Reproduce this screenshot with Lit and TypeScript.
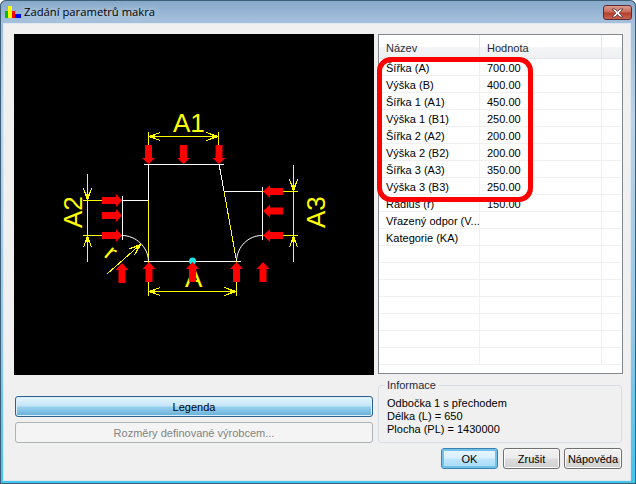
import { LitElement, css, html, svg } from "lit";
import { customElement } from "lit/decorators.js";

type Row = [string, string];

const ROWS: Row[] = [
  ["Šířka (A)", "700.00"],
  ["Výška (B)", "400.00"],
  ["Šířka 1 (A1)", "450.00"],
  ["Výška 1 (B1)", "250.00"],
  ["Šířka 2 (A2)", "200.00"],
  ["Výška 2 (B2)", "200.00"],
  ["Šířka 3 (A3)", "350.00"],
  ["Výška 3 (B3)", "250.00"],
  ["Rádius (r)", "150.00"],
  ["Vřazený odpor (V...", ""],
  ["Kategorie (KA)", ""],
  ["", ""],
  ["", ""],
  ["", ""],
  ["", ""],
  ["", ""],
  ["", ""],
  ["", ""],
];

const WHITE = "#fff";
const YELLOW = "#ff0";

// [x1, y1, x2, y2, colour]
const LINES: [number, number, number, number, string][] = [
  [144, 164.5, 224, 164.5, WHITE],
  [148.5, 164, 148.5, 200, WHITE],
  [148.5, 200, 148.5, 261, YELLOW],
  [219, 164, 224, 191, WHITE],
  [224, 191, 236.5, 261, YELLOW],
  [224, 191.5, 262, 191.5, WHITE],
  [122, 200.5, 148, 200.5, WHITE],
  [122.5, 196, 122.5, 240, WHITE],
  [262.5, 187, 262.5, 240, WHITE],
  [144, 261.5, 241, 261.5, WHITE],
  [148.5, 132, 148.5, 146, YELLOW],
  [218.5, 132, 218.5, 146, YELLOW],
  [148, 136.5, 219, 136.5, YELLOW],
  [148.5, 261, 148.5, 296, YELLOW],
  [236.5, 261, 236.5, 296, YELLOW],
  [148, 291.5, 237, 291.5, YELLOW],
  [83, 200.5, 122, 200.5, YELLOW],
  [83, 235.5, 122, 235.5, YELLOW],
  [87.5, 174, 87.5, 262, YELLOW],
  [262, 191.5, 298, 191.5, YELLOW],
  [262, 235.5, 298, 235.5, YELLOW],
  [293.5, 165, 293.5, 262, YELLOW],
  [107, 274, 141, 244, YELLOW],
];

// fan ticks on the dimension lines: tip x, tip y, direction x, direction y
const TICKS: [number, number, number, number][] = [
  [148.5, 136.5, 1, 0],
  [218.5, 136.5, -1, 0],
  [148.5, 291.5, 1, 0],
  [236.5, 291.5, -1, 0],
  [87.5, 200.5, 0, -1],
  [87.5, 235.5, 0, 1],
  [293.5, 191.5, 0, -1],
  [293.5, 235.5, 0, 1],
  [141, 244, -0.75, 0.66],
];

const arrowDown = (x: number, tip: number) =>
  `${x - 3.5},${tip - 19} ${x + 3.5},${tip - 19} ${x + 3.5},${tip - 6} ${x + 6.5},${tip - 6} ${x},${tip} ${x - 6.5},${tip - 6} ${x - 3.5},${tip - 6}`;
const arrowUp = (x: number, tip: number) =>
  `${x - 3.5},${tip + 20} ${x + 3.5},${tip + 20} ${x + 3.5},${tip + 7} ${x + 6.5},${tip + 7} ${x},${tip} ${x - 6.5},${tip + 7} ${x - 3.5},${tip + 7}`;
const arrowRight = (tip: number, y: number) =>
  `${tip - 20},${y - 3.5} ${tip - 20},${y + 3.5} ${tip - 6},${y + 3.5} ${tip - 6},${y + 6.5} ${tip},${y} ${tip - 6},${y - 6.5} ${tip - 6},${y - 3.5}`;
const arrowLeft = (tip: number, y: number) =>
  `${tip + 20},${y - 3.5} ${tip + 20},${y + 3.5} ${tip + 7},${y + 3.5} ${tip + 7},${y + 6.5} ${tip},${y} ${tip + 7},${y - 6.5} ${tip + 7},${y - 3.5}`;

const ARROWS = [
  arrowDown(148.5, 164),
  arrowDown(183.5, 164),
  arrowDown(219, 164),
  arrowRight(122, 200.5),
  arrowRight(122, 215.5),
  arrowRight(122, 235.5),
  arrowLeft(263, 191.5),
  arrowLeft(263, 211),
  arrowLeft(263, 235.5),
  arrowUp(122, 263),
  arrowUp(149, 262),
  arrowUp(192.5, 262),
  arrowUp(236.5, 262),
  arrowUp(263, 262),
];

function fan(t: [number, number, number, number]) {
  const [x, y, dx, dy] = t;
  const nx = -dy;
  const ny = dx;
  return [-1, 1].flatMap((s) => {
    const p = (a: number, b: number) => `${x + dx * a + nx * b * s},${y + dy * a + ny * b * s}`;
    return [
      svg`<polyline points="${p(0, 0)} ${p(12, 4)}" />`,
      svg`<polyline points="${p(0, 0)} ${p(8, 2)}" />`,
    ];
  });
}

@customElement("app-root")
export class AppRoot extends LitElement {
  static styles = css`
    :host {
      display: block;
      width: 636px;
      height: 484px;
      font-family: "Liberation Sans", Arial, sans-serif;
      font-size: 11px;
      color: #000;
    }
    .window {
      position: relative;
      box-sizing: border-box;
      width: 636px;
      height: 484px;
      display: flex;
      flex-direction: column;
      padding: 0 5px 3px 3px;
      background: linear-gradient(180deg, #86a8c9 0, #a5c0dc 22px, #bcd3e8 120px, #8fc8e8 70%, #45c4ee 100%);
      border-radius: 6px 6px 0 0;
      box-shadow: inset 0 0 0 1px #3d5e78;
    }
    .titlebar {
      flex: none;
      height: 23px;
      display: flex;
      align-items: center;
      gap: 3px;
      padding: 0 0 0 2px;
    }
    .title {
      flex: 1;
      font-family: "Open Sans", sans-serif;
      font-size: 11.25px;
      text-shadow: 0 0 6px #dbe8f4;
    }
    .close {
      width: 29px;
      height: 15px;
      margin-top: 2px;
      margin-right: -1px;
      box-sizing: border-box;
      border: 1px solid #5e2a33;
      border-radius: 3px;
      background: linear-gradient(180deg, #dc9d8f 0, #c86a58 45%, #b2402c 55%, #c86552 100%);
      display: flex;
      align-items: center;
      justify-content: center;
    }
    .body {
      flex: 1;
      min-height: 0;
      box-sizing: border-box;
      background: #f0f0f0;
      border: 1px solid #dfe8ef;
      display: grid;
      grid-template-columns: 360px 244px;
      column-gap: 4px;
      grid-template-rows: 341px 1fr;
      padding: 10px 0 0 10px;
    }
    .canvas {
      background: #000;
      width: 360px;
      height: 341px;
    }
    .canvas svg {
      display: block;
    }
    .table-wrap {
      position: relative;
    }
    .table {
      box-sizing: border-box;
      width: 245px;
      height: 340px;
      background: #fff;
      border: 1px solid #828790;
      overflow: hidden;
    }
    .row {
      display: grid;
      grid-template-columns: 101px 122px 1fr;
      height: 17px;
      box-sizing: border-box;
      border-bottom: 1px solid #f0f0f0;
      line-height: 18px;
      white-space: nowrap;
    }
    .row > div {
      padding-left: 7px;
      border-right: 1px solid #f0f0f0;
      overflow: hidden;
    }
    .row > div:last-child {
      border-right: none;
    }
    .head {
      height: 24px;
      line-height: 27px;
      color: #1f2c3c;
      background: linear-gradient(180deg, #fff 0, #fff 50%, #f3f4f6 55%, #eff0f2 100%);
      border-bottom: 1px solid #e4e6e9;
    }
    .head > div {
      border-right: 1px solid #e3e5e8;
    }
    .mark {
      position: absolute;
      left: -1px;
      top: 23px;
      width: 156px;
      height: 145px;
      box-sizing: border-box;
      border: 5px solid #f00;
      border-radius: 14px;
      pointer-events: none;
    }
    .left {
      display: flex;
      flex-direction: column;
      gap: 5px;
      padding: 21px 0 0 1px;
    }
    .btn {
      box-sizing: border-box;
      height: 21px;
      display: flex;
      align-items: center;
      justify-content: center;
      border: 1px solid #707070;
      border-radius: 3px;
      background: linear-gradient(180deg, #f2f2f2 0, #ebebeb 48%, #dddddd 52%, #cfcfcf 100%);
      box-shadow: inset 0 0 0 1px #fbfbfb;
    }
    .wide {
      width: 358px;
    }
    .hot {
      border-color: #2c628b;
      background: linear-gradient(180deg, #e5f4fc 0, #c4e5f6 48%, #98d1ef 52%, #66afd7 100%);
      box-shadow: inset 0 0 0 1px #d8eefa;
    }
    .off {
      border-color: #adb2b5;
      background: #f4f4f4;
      color: #838383;
      box-shadow: none;
    }
    .side {
      display: flex;
      flex-direction: column;
      gap: 5px;
      padding-top: 5px;
    }
    fieldset {
      box-sizing: border-box;
      margin: 0;
      width: 244px;
      height: 63px;
      padding: 6px 0 0 8px;
      border: 1px solid #d5dfe5;
      border-radius: 3px;
      line-height: 13px;
    }
    legend {
      padding: 0 2px;
      margin-left: -2px;
      color: #1f2c3c;
      line-height: 11px;
    }
    .actions {
      display: flex;
      gap: 5px;
      padding-left: 63px;
    }
    .actions .btn {
      width: 57px;
      height: 21px;
    }
    .actions .help {
      width: 58px;
      margin-left: -1px;
    }
    .ok {
      border-color: #3c7fb1;
      background: linear-gradient(180deg, #eaf6fd 0, #d9f0fc 48%, #bee6fd 52%, #a7d9f5 100%);
      box-shadow: inset 0 0 0 2px #6fc3ea;
    }
  `;

  private renderIcon() {
    return html`<svg width="16" height="12" viewBox="0 0 16 12" shape-rendering="crispEdges">
      <rect x="3" y="0" width="4" height="12" fill="#ff0" />
      <rect x="0" y="5" width="3" height="7" fill="#00c000" />
      <rect x="7" y="5" width="3" height="7" fill="#f00" />
      <rect x="10" y="8" width="6" height="4" fill="#00f" />
    </svg>`;
  }

  private renderDiagram() {
    return html`<svg width="360" height="341" viewBox="14 34 360 341">
      <g stroke-width="1" shape-rendering="crispEdges">
        ${LINES.map(
          ([x1, y1, x2, y2, c]) => svg`<line x1=${x1} y1=${y1} x2=${x2} y2=${y2} stroke=${c} />`,
        )}
      </g>
      <g fill="none" stroke="#ff0" shape-rendering="crispEdges">${TICKS.map(fan)}</g>
      <path d="M122 235.5 C136 235.5 148 247 148.5 261" fill="none" stroke="#fff" />
      <path d="M262 235.5 C248 235.5 237 247 236.5 261" fill="none" stroke="#fff" />
      <g fill="#ff0" font-family="Liberation Sans, sans-serif" font-size="26">
        <text x="173" y="132">A1</text>
        <text transform="translate(82 228) rotate(-90)">A2</text>
        <text transform="translate(325 228) rotate(-90)">A3</text>
        <text x="185" y="287">A</text>
        <text transform="translate(103 256) rotate(40)" font-size="24">r</text>
      </g>
      <circle cx="192.5" cy="261" r="3.5" fill="#19e6e6" />
      <g fill="#f00">${ARROWS.map((p) => svg`<polygon points=${p} />`)}</g>
    </svg>`;
  }

  render() {
    return html`
      <div class="window">
        <div class="titlebar">
          ${this.renderIcon()}
          <div class="title">Zadání parametrů makra</div>
          <div class="close">
            <svg width="13" height="10" viewBox="0 0 13 10">
              <path d="M1 1 H4 L6.5 3.5 L9 1 H12 L8.2 5 L12 9 H9 L6.5 6.5 L4 9 H1 L4.8 5 Z" fill="#fff" stroke="#5a3038" stroke-width="0.8" />
            </svg>
          </div>
        </div>
        <div class="body">
          <div class="canvas">${this.renderDiagram()}</div>
          <div class="table-wrap">
            <div class="table">
              <div class="row head"><div>Název</div><div>Hodnota</div><div></div></div>
              ${ROWS.map(
                ([name, value]) =>
                  html`<div class="row"><div>${name}</div><div>${value}</div><div></div></div>`,
              )}
            </div>
            <div class="mark"></div>
          </div>
          <div class="left">
            <div class="btn wide hot">Legenda</div>
            <div class="btn wide off">Rozměry definované výrobcem...</div>
          </div>
          <div class="side">
            <fieldset>
              <legend>Informace</legend>
              <div>Odbočka 1 s přechodem</div>
              <div>Délka (L) = 650</div>
              <div>Plocha (PL) = 1430000</div>
            </fieldset>
            <div class="actions">
              <div class="btn ok">OK</div>
              <div class="btn">Zrušit</div>
              <div class="btn help">Nápověda</div>
            </div>
          </div>
        </div>
      </div>
    `;
  }
}
